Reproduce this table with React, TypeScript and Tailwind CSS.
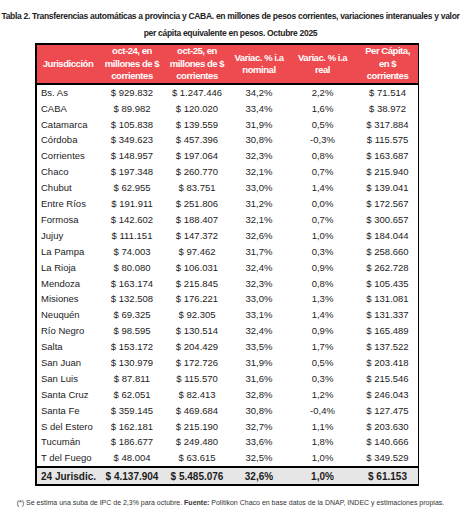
const rows = [
  ["Bs. As", "$ 929.832", "$ 1.247.446", "34,2%", "2,2%", "$ 71.514"],
  ["CABA", "$ 89.982", "$ 120.020", "33,4%", "1,6%", "$ 38.972"],
  ["Catamarca", "$ 105.838", "$ 139.559", "31,9%", "0,5%", "$ 317.884"],
  ["Córdoba", "$ 349.623", "$ 457.396", "30,8%", "-0,3%", "$ 115.575"],
  ["Corrientes", "$ 148.957", "$ 197.064", "32,3%", "0,8%", "$ 163.687"],
  ["Chaco", "$ 197.348", "$ 260.770", "32,1%", "0,7%", "$ 215.940"],
  ["Chubut", "$ 62.955", "$ 83.751", "33,0%", "1,4%", "$ 139.041"],
  ["Entre Ríos", "$ 191.911", "$ 251.806", "31,2%", "0,0%", "$ 172.567"],
  ["Formosa", "$ 142.602", "$ 188.407", "32,1%", "0,7%", "$ 300.657"],
  ["Jujuy", "$ 111.151", "$ 147.372", "32,6%", "1,0%", "$ 184.044"],
  ["La Pampa", "$ 74.003", "$ 97.462", "31,7%", "0,3%", "$ 258.660"],
  ["La Rioja", "$ 80.080", "$ 106.031", "32,4%", "0,9%", "$ 262.728"],
  ["Mendoza", "$ 163.174", "$ 215.845", "32,3%", "0,8%", "$ 105.435"],
  ["Misiones", "$ 132.508", "$ 176.221", "33,0%", "1,3%", "$ 131.081"],
  ["Neuquén", "$ 69.325", "$ 92.305", "33,1%", "1,4%", "$ 131.337"],
  ["Río Negro", "$ 98.595", "$ 130.514", "32,4%", "0,9%", "$ 165.489"],
  ["Salta", "$ 153.172", "$ 204.429", "33,5%", "1,7%", "$ 137.522"],
  ["San Juan", "$ 130.979", "$ 172.726", "31,9%", "0,5%", "$ 203.418"],
  ["San Luis", "$ 87.811", "$ 115.570", "31,6%", "0,3%", "$ 215.546"],
  ["Santa Cruz", "$ 62.051", "$ 82.413", "32,8%", "1,2%", "$ 246.043"],
  ["Santa Fe", "$ 359.145", "$ 469.684", "30,8%", "-0,4%", "$ 127.475"],
  ["S del Estero", "$ 162.181", "$ 215.190", "32,7%", "1,1%", "$ 203.630"],
  ["Tucumán", "$ 186.677", "$ 249.480", "33,6%", "1,8%", "$ 140.666"],
  ["T del Fuego", "$ 48.004", "$ 63.615", "32,5%", "1,0%", "$ 349.529"],
];

const total = ["24 Jurisdic.", "$ 4.137.904", "$ 5.485.076", "32,6%", "1,0%", "$ 61.153"];

const cols = "grid grid-cols-[62px_66px_64px_60px_67px_63px]";

export default function App() {
  return (
    <div className="w-[461px] h-[523px] bg-white text-[#1c1c1c] font-['Liberation_Sans',Arial,sans-serif]">
      {/* Título */}
      <p className="pt-[8px] text-center text-[8.5px] leading-[17px] font-bold tracking-[-0.3px] whitespace-nowrap text-[#222]">
        Tabla 2. Transferencias automáticas a provincia y CABA. en millones de pesos corrientes, variaciones interanuales y valor
        <br />
        per cápita equivalente en pesos. Octubre 2025
      </p>

      {/* Tabla */}
      <div className="ml-[35px] mt-[1px] w-[384px] border-l-2 border-t-2 border-b-2 border-r border-black">
        <div className={`${cols} h-[40px] bg-[#ee4b50] border-b-2 border-black text-white text-[9.5px] leading-[12.5px] font-bold tracking-[-0.45px]`}>
          <div className="flex items-center justify-center">Jurisdicción</div>
          <div className="flex items-center justify-center text-center">oct-24, en<br />millones de $<br />corrientes</div>
          <div className="flex items-center justify-center text-center">oct-25, en<br />millones de $<br />corrientes</div>
          <div className="flex items-center justify-center text-center">Variac. % i.a<br />nominal</div>
          <div className="flex items-center justify-center text-center">Variac. % i.a<br />real</div>
          <div className="flex items-center justify-center text-center">Per Cápita,<br />en $<br />corrientes</div>
        </div>

        {rows.map((r) => (
          <div key={r[0]} className={`${cols} h-[15.9px] items-center text-[9.5px]`}>
            <div className="pl-[4px]">{r[0]}</div>
            {r.slice(1).map((v, i) => (
              <div key={i} className="text-center">{v}</div>
            ))}
          </div>
        ))}

        <div className={`${cols} h-[18px] items-center bg-[#e7e6e6] border-t-2 border-black text-[10px] font-bold`}>
          <div className="pl-[4px]">{total[0]}</div>
          {total.slice(1).map((v, i) => (
            <div key={i} className="text-center">{v}</div>
          ))}
        </div>
      </div>

      {/* Nota */}
      <p className="mt-[12px] text-center text-[7px] text-[#333]">
        (*) Se estima una suba de IPC de 2,3% para octubre. <span className="font-bold">Fuente:</span> Politikon Chaco en base datos de la DNAP, INDEC y estimaciones propias.
      </p>
    </div>
  );
}
